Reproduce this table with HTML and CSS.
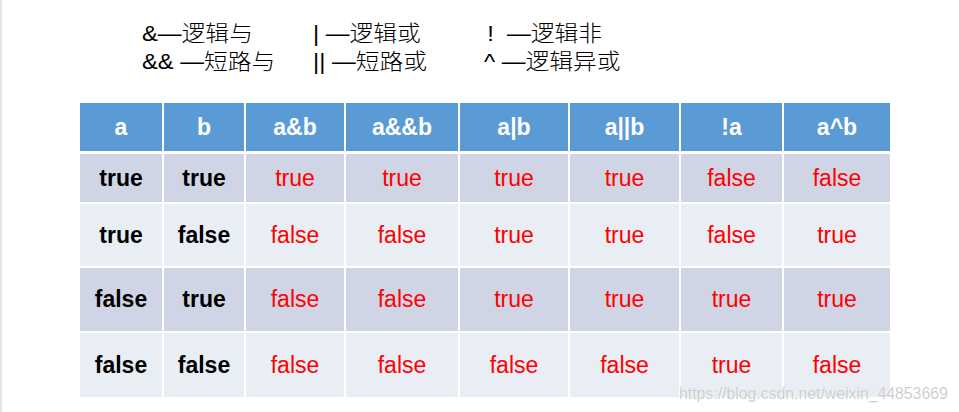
FILE: index.html
```html
<!DOCTYPE html>
<html lang="zh">
<head>
<meta charset="utf-8">
<link rel="stylesheet" href="styles.css">
</head>
<body>
<div class="page">
  <div class="legend">
    <span class="item">&amp;—逻辑与</span>
    <span class="item">| —逻辑或</span>
    <span class="item bang">!&nbsp; —逻辑非</span>
    <span class="item">&amp;&amp; —短路与</span>
    <span class="item">|| —短路或</span>
    <span class="item">^ —逻辑异或</span>
  </div>
  <div class="table">
    <div class="cell head">a</div>
    <div class="cell head">b</div>
    <div class="cell head">a&amp;b</div>
    <div class="cell head">a&amp;&amp;b</div>
    <div class="cell head">a|b</div>
    <div class="cell head">a||b</div>
    <div class="cell head">!a</div>
    <div class="cell head">a^b</div>

    <div class="cell dark in">true</div>
    <div class="cell dark in">true</div>
    <div class="cell dark out">true</div>
    <div class="cell dark out">true</div>
    <div class="cell dark out">true</div>
    <div class="cell dark out">true</div>
    <div class="cell dark out">false</div>
    <div class="cell dark out">false</div>

    <div class="cell light in">true</div>
    <div class="cell light in">false</div>
    <div class="cell light out">false</div>
    <div class="cell light out">false</div>
    <div class="cell light out">true</div>
    <div class="cell light out">true</div>
    <div class="cell light out">false</div>
    <div class="cell light out">true</div>

    <div class="cell dark in">false</div>
    <div class="cell dark in">true</div>
    <div class="cell dark out">false</div>
    <div class="cell dark out">false</div>
    <div class="cell dark out">true</div>
    <div class="cell dark out">true</div>
    <div class="cell dark out">true</div>
    <div class="cell dark out">true</div>

    <div class="cell light in">false</div>
    <div class="cell light in">false</div>
    <div class="cell light out">false</div>
    <div class="cell light out">false</div>
    <div class="cell light out">false</div>
    <div class="cell light out">false</div>
    <div class="cell light out">true</div>
    <div class="cell light out">false</div>
  </div>
  <div class="watermark">https://blog.csdn.net/weixin_44853669</div>
</div>
</body>
</html>
```
FILE: styles.css
```css
html, body {
  margin: 0;
  padding: 0;
  background: #ffffff;
}
.page {
  position: relative;
  width: 957px;
  height: 412px;
  border-left: 2px solid #e6e6e6;
  overflow: hidden;
  font-family: "Liberation Sans", Arial, sans-serif;
}
.legend {
  display: grid;
  grid-template-columns: 171px 171px auto;
  grid-auto-rows: 28px;
  margin-left: 140px;
  padding-top: 20px;
  font-family: "Liberation Sans", "Noto Sans CJK SC", sans-serif;
  font-size: 22px;
  font-weight: 300;
  line-height: 28px;
  color: #000000;
}
.item {
  display: inline-block;
  justify-self: start;
  white-space: nowrap;
  transform: scaleX(1.08);
  transform-origin: left center;
}
.bang {
  padding-left: 3px;
}
.table {
  display: grid;
  grid-template-columns: 82px 80px 98px 112px 108px 109px 101px 106px;
  grid-template-rows: 49px 48px 62px 63px 64px;
  column-gap: 2px;
  row-gap: 2px;
  margin-left: 78px;
  margin-top: 27px;
  width: 810px;
}
.cell {
  display: flex;
  align-items: center;
  justify-content: center;
  font-size: 23px;
}
.head {
  background: #5b9bd5;
  color: #ffffff;
  font-weight: bold;
  margin-bottom: 1px;
}
.dark {
  background: #cfd5e5;
}
.light {
  background: #e9edf4;
}
.in {
  color: #000000;
  font-weight: bold;
}
.out {
  color: #ff0000;
}
.watermark {
  position: absolute;
  left: 677px;
  top: 385px;
  font-family: "Liberation Sans", Arial, sans-serif;
  font-size: 15.8px;
  color: rgba(190, 190, 190, 0.75);
  text-shadow: 0 0 1px rgba(255, 255, 255, 0.9);
  white-space: nowrap;
}
```
